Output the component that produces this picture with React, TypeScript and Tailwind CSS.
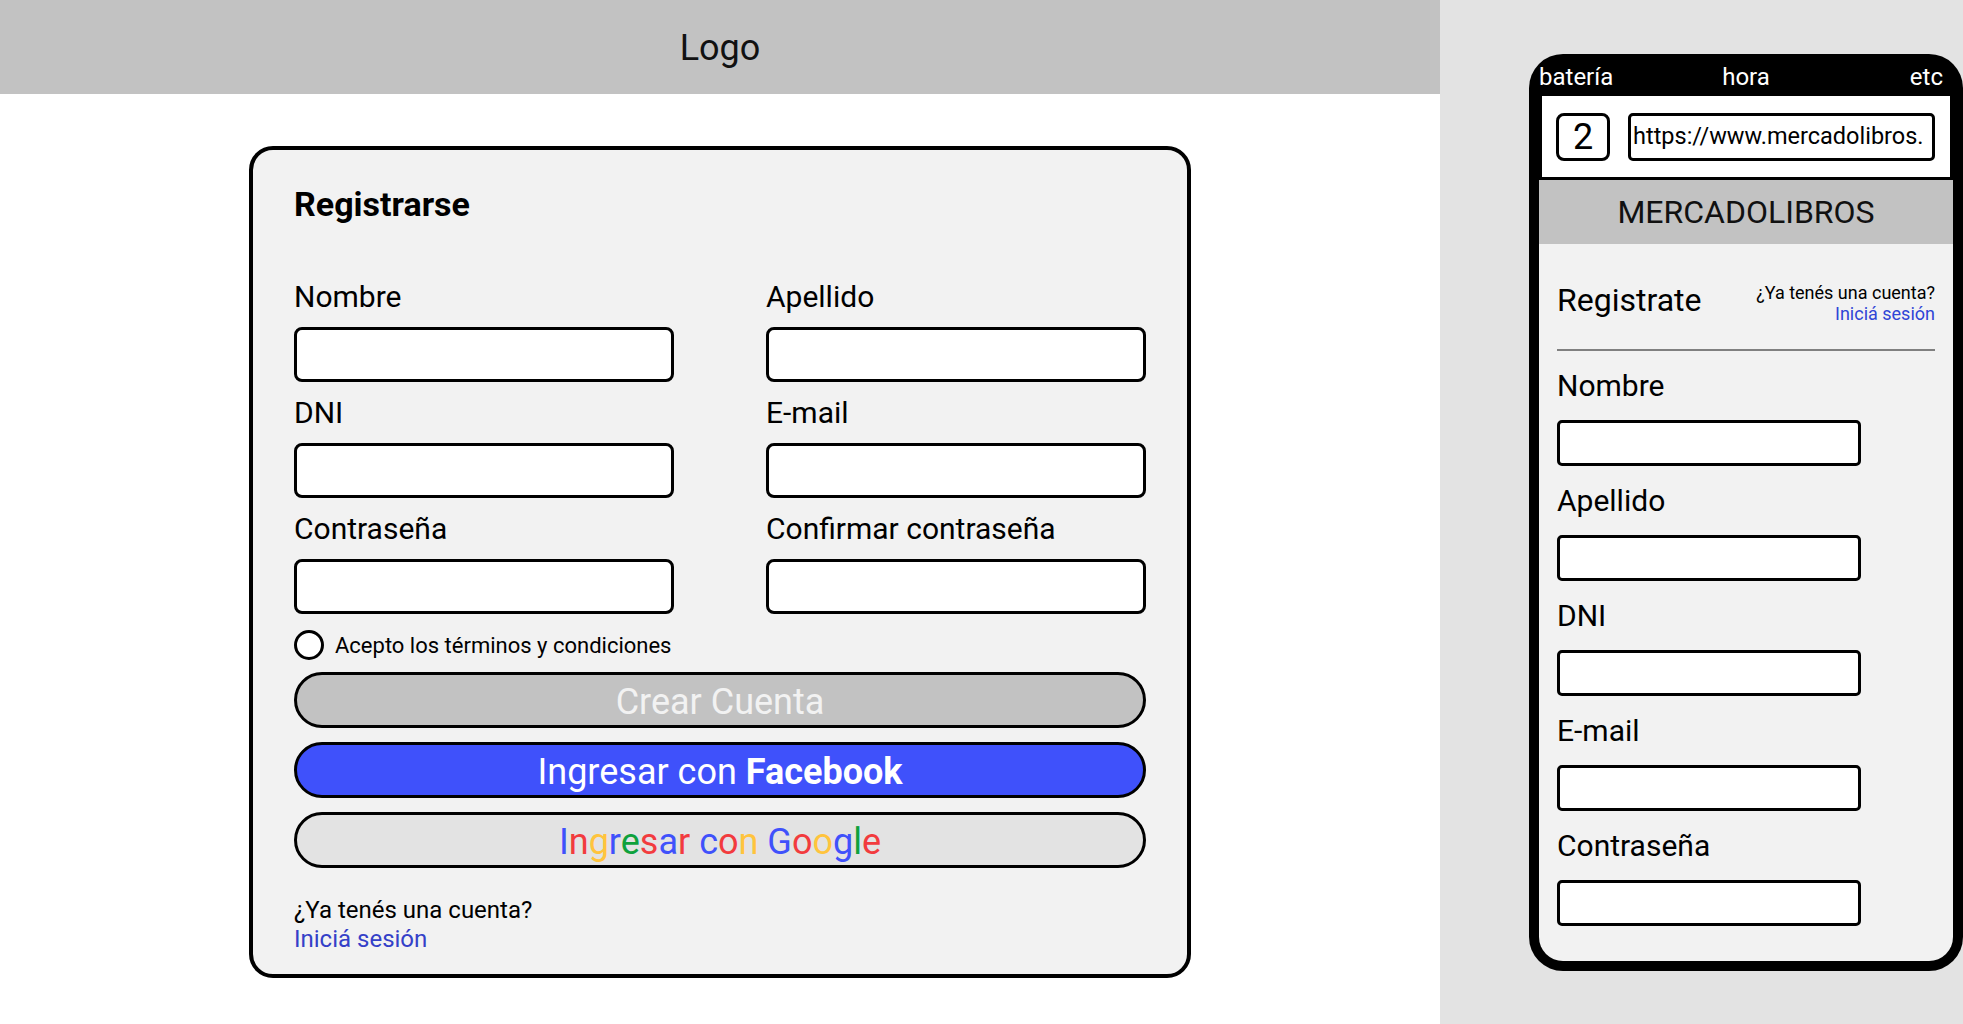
import React from 'react';

const googleLetters: [string, string][] = [
  ['I', '#3f51fb'], ['n', '#f23b3e'], ['g', '#ffc43d'], ['r', '#3f51fb'], ['e', '#0ea13c'],
  ['s', '#f23b3e'], ['a', '#3f51fb'], ['r', '#f23b3e'], [' ', ''], ['c', '#3f51fb'],
  ['o', '#f23b3e'], ['n', '#ffc43d'], [' ', ''], ['G', '#3f51fb'], ['o', '#f23b3e'],
  ['o', '#ffc43d'], ['g', '#3f51fb'], ['l', '#0ea13c'], ['e', '#f23b3e'],
];

function Field({ label }: { label: string }) {
  return (
    <div className="flex flex-col">
      <label className="text-[30px] leading-[34px] text-black mb-[13px]">{label}</label>
      <div className="h-[55px] bg-white border-[3px] border-black rounded-[8px] mb-[14px]" />
    </div>
  );
}

function MobileField({ label }: { label: string }) {
  return (
    <div className="flex flex-col">
      <label className="text-[30px] leading-[34px] text-black mb-[17px]">{label}</label>
      <div className="w-[304px] h-[46px] bg-white border-[3px] border-black rounded-[5px] mb-[18px]" />
    </div>
  );
}

function DesktopForm() {
  return (
    <div className="flex-1 bg-white flex flex-col">
      <header className="h-[94px] bg-[#c2c2c2] flex items-center justify-center">
        <span className="text-[36px] text-[#111] mt-[1px]">Logo</span>
      </header>
      <div className="flex justify-center pt-[52px]">
        <div className="w-[942px] bg-[#f2f2f2] border-[4px] border-black rounded-[24px] px-[41px] pt-[36px] pb-[20px]">
          <h1 className="text-[34px] leading-[36px] font-bold text-black mb-[58px]">Registrarse</h1>
          <div className="grid grid-cols-2 gap-x-[92px]">
            <Field label="Nombre" />
            <Field label="Apellido" />
            <Field label="DNI" />
            <Field label="E-mail" />
            <Field label="Contraseña" />
            <Field label="Confirmar contraseña" />
          </div>
          <div className="flex items-center mt-[2px] h-[30px]">
            <span className="w-[30px] h-[30px] rounded-full border-[3px] border-black bg-white" />
            <span className="text-[22px] text-black ml-[11px]">Acepto los términos y condiciones</span>
          </div>
          <div className="flex flex-col gap-[14px] mt-[12px]">
            <button className="h-[56px] rounded-full border-[3px] border-black bg-[#c2c2c2] text-[#f2f2f2] text-[36px]">
              Crear Cuenta
            </button>
            <button className="h-[56px] rounded-full border-[3px] border-black bg-[#3f51fb] text-white text-[36px]">
              Ingresar con <span className="font-bold">Facebook</span>
            </button>
            <button className="h-[56px] rounded-full border-[3px] border-black bg-[#e3e3e3] text-[36px]">
              {googleLetters.map(([ch, color], i) => (
                <span key={i} style={color ? { color } : undefined}>{ch === ' ' ? '\u00a0' : ch}</span>
              ))}
            </button>
          </div>
          <div className="mt-[28px] text-[24px] leading-[29px]">
            <p className="text-black">¿Ya tenés una cuenta?</p>
            <a className="text-[#3440c8]">Iniciá sesión</a>
          </div>
        </div>
      </div>
    </div>
  );
}

function Phone() {
  return (
    <div className="w-[523px] bg-[#e3e3e3] pt-[54px] pl-[89px]">
      <div className="w-[434px] h-[917px] bg-black rounded-[34px] px-[10px] pb-[10px] flex flex-col">
        <div className="h-[42px] grid grid-cols-3 items-end pb-[5px] text-white text-[24px] leading-[28px]">
          <span>batería</span>
          <span className="text-center">hora</span>
          <span className="text-right pr-[10px]">etc</span>
        </div>
        <div className="h-[81px] bg-white mx-[3px] flex items-center pl-[14px] pr-[15px] gap-[18px]">
          <div className="w-[54px] h-[48px] border-[3px] border-black rounded-[8px] flex items-center justify-center text-[36px] text-black">
            2
          </div>
          <div className="flex-1 h-[48px] border-[3px] border-black rounded-[5px] flex items-center pl-[2px] overflow-hidden">
            <span className="text-[23.5px] text-black whitespace-nowrap">https://www.mercadolibros.</span>
          </div>
        </div>
        <div className="h-[3px]" />
        <div className="h-[64px] bg-[#c2c2c2] flex items-center justify-center">
          <span className="text-[32px] text-[#111]">MERCADOLIBROS</span>
        </div>
        <div className="flex-1 bg-[#f2f2f2] rounded-b-[24px] px-[18px] pt-[38px]">
          <div className="flex items-start justify-between">
            <span className="text-[32px] leading-[36px] text-black">Registrate</span>
            <div className="text-right text-[18px] leading-[21px]">
              <p className="text-black">¿Ya tenés una cuenta?</p>
              <a className="text-[#2f45d6]">Iniciá sesión</a>
            </div>
          </div>
          <div className="h-[2px] bg-[#808080] mt-[25px] mb-[18px]" />
          <MobileField label="Nombre" />
          <MobileField label="Apellido" />
          <MobileField label="DNI" />
          <MobileField label="E-mail" />
          <MobileField label="Contraseña" />
        </div>
      </div>
    </div>
  );
}

export default function App() {
  return (
    <div className="w-[1963px] h-[1024px] flex overflow-hidden font-[Roboto,sans-serif]">
      <DesktopForm />
      <Phone />
    </div>
  );
}
